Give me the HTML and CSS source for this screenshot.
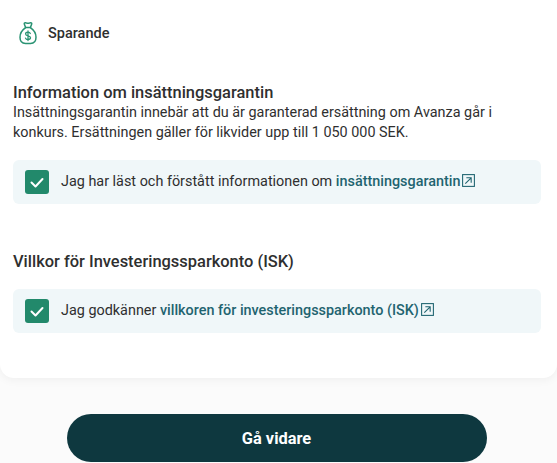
FILE: index.html
```html
<!DOCTYPE html>
<html lang="sv">
<head>
  <meta charset="UTF-8">
  <meta name="viewport" content="width=device-width, initial-scale=1.0">
  <title>Sparande</title>
  <link rel="stylesheet" href="styles.css">
</head>
<body>
  <div class="card">
    <div class="account">
      <svg class="bag" viewBox="0 0 24 24" fill="none" stroke="#2a9373" stroke-width="1.5" stroke-linecap="round" stroke-linejoin="round">
        <path d="M9.6 6.6 8.3 2.9c-.2-.6.3-1.2 1-1.1l1.2.3c1 .2 2 .2 3 0l1.2-.3c.7-.1 1.2.5 1 1.1l-1.3 3.7"/>
        <path d="M9.6 6.6h4.8"/>
        <path d="M9.6 6.6C6.6 8.600 4 12.400 4 16.300 4 20.300 6.200 22.500 9.500 22.500h5c3.300 0 5.500-2.200 5.500-6.200 0-3.900-2.600-7.700-5.600-9.700"/>
        <path d="M14.300 12.500c-.3-.8-1.200-1.300-2.300-1.300-1.400 0-2.400.7-2.400 1.800 0 2.500 4.900 1.200 4.900 3.700 0 1.100-1.100 1.800-2.500 1.800-1.200 0-2.200-.5-2.500-1.400M12 9.900v9.700" stroke-width="1.300"/>
      </svg>
      <span class="account-name">Sparande</span>
    </div>

    <h2 class="first-title">Information om insättningsgarantin</h2>
    <p class="info">Insättningsgarantin innebär att du är garanterad ersättning om Avanza går i konkurs. Ersättningen gäller för likvider upp till 1 050 000 SEK.</p>
    <label class="check-row">
      <span class="checkbox">
        <svg viewBox="0 0 24 24" fill="none" stroke="#fff" stroke-width="2" stroke-linecap="round" stroke-linejoin="round"><path d="M6.500 12.500l4 4L17.500 9"/></svg>
      </span>
      <span class="check-text">Jag har läst och förstått informationen om <a href="#" class="link">insättningsgarantin<svg class="ext" viewBox="0 0 14 14" fill="none" stroke="#1f6470" stroke-width="1"><rect x="1.500" y="1.500" width="11" height="11"/><path d="M4 10l5.500-5.500M5 4.500h4.500V9"/></svg></a></span>
    </label>

    <h2 class="second-title">Villkor för Investeringssparkonto (ISK)</h2>
    <label class="check-row">
      <span class="checkbox">
        <svg viewBox="0 0 24 24" fill="none" stroke="#fff" stroke-width="2" stroke-linecap="round" stroke-linejoin="round"><path d="M6.500 12.500l4 4L17.500 9"/></svg>
      </span>
      <span class="check-text">Jag godkänner <a href="#" class="link">villkoren för investeringssparkonto (ISK)<svg class="ext" viewBox="0 0 14 14" fill="none" stroke="#1f6470" stroke-width="1"><rect x="1.500" y="1.500" width="11" height="11"/><path d="M4 10l5.500-5.500M5 4.500h4.500V9"/></svg></a></span>
    </label>
  </div>

  <div class="footer">
    <button class="next">Gå vidare</button>
  </div>
</body>
</html>
```

FILE: styles.css
```css
html, body { height: 100%; }
body { margin: 0; height: 463px; overflow: hidden; background: #fbfbfb; font-family: Roboto, Arial, sans-serif; color: #2f2f2f; font-size: 14.4px; }

.card { background: #fff; height: 378px; box-sizing: border-box; padding: 20px 16px 0 13px; border-radius: 0 0 14px 14px; box-shadow: 0 2px 10px rgba(0, 0, 0, 0.05); }

.account { display: flex; align-items: center; gap: 8px; height: 26px; padding-left: 3px; }
.bag { width: 24px; height: 24px; flex: none; }
.account-name { font-weight: 500; font-size: 14.5px; }

h2 { margin: 0; font-size: 16.45px; line-height: 21px; font-weight: 500; }
.first-title { margin-top: 36px; }
.second-title { margin-top: 47px; }

.info { margin: 0; max-width: 500px; line-height: 20px; }

.check-row { display: flex; align-items: center; gap: 12px; height: 44px; margin-top: 17px; padding-left: 12px; background: #f0f7f9; border-radius: 6px; }
.check-text { padding-bottom: 2px; }
.checkbox { display: flex; width: 24px; height: 24px; flex: none; background: #22896b; border-radius: 3px; }
.checkbox svg { width: 24px; height: 24px; }

.link { color: #1f6470; font-weight: 500; text-decoration: none; }
.ext { width: 15px; height: 15px; margin-left: 1px; vertical-align: -2px; }

.footer { display: flex; justify-content: center; padding: 36px 4px 0 0; }
.next { width: 420px; height: 48px; border: 0; border-radius: 24px; background: #0e383f; color: #fff; font-family: inherit; font-size: 16.4px; font-weight: 700; }
```
